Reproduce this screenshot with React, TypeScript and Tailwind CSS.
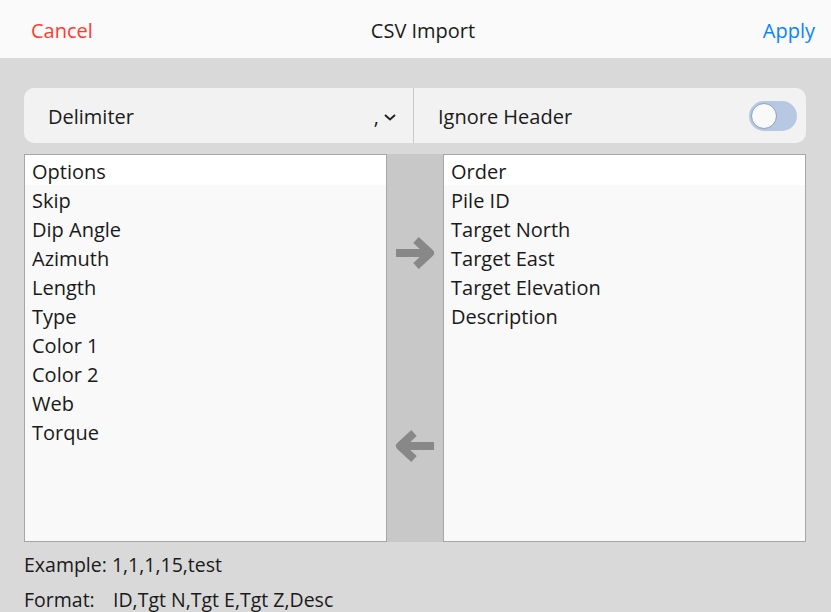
import React, { useState } from 'react';

const leftItems = ['Skip', 'Dip Angle', 'Azimuth', 'Length', 'Type', 'Color 1', 'Color 2', 'Web', 'Torque'];
const rightItems = ['Pile ID', 'Target North', 'Target East', 'Target Elevation', 'Description'];

const ArrowRight: React.FC = () => (
  <svg width="46" height="36" viewBox="0 0 46 36">
    <path d="M4 18 H38 M24 5 L38 18 L24 31" fill="none" stroke="#888" strokeWidth="8" strokeLinejoin="round" />
  </svg>
);

const ArrowLeft: React.FC = () => (
  <svg width="46" height="36" viewBox="0 0 46 36">
    <path d="M42 18 H8 M22 5 L8 18 L22 31" fill="none" stroke="#888" strokeWidth="8" strokeLinejoin="round" />
  </svg>
);

const List: React.FC<{ title: string; items: string[] }> = ({ title, items }) => (
  <div className="flex-1 border border-[#a6a6a6] bg-[#f9f9f9]">
    <div className="bg-white h-[30px] pl-[7px] pt-[2px] leading-[30px]">{title}</div>
    {items.map((it) => (
      <div key={it} className="h-[29px] pl-[7px] pt-[1px] leading-[29px]">
        {it}
      </div>
    ))}
  </div>
);

const App: React.FC = () => {
  const [ignoreHeader, setIgnoreHeader] = useState(false);

  return (
    <div className="w-[831px] h-[612px] bg-[#d9d9d9] text-[#1a1a1a] font-['Open_Sans',sans-serif] overflow-hidden">
      <div className="h-[58px] bg-[#fafafa] flex items-center justify-between pl-[31px] pr-[16px] pt-[3px] text-[20px]">
        <span className="text-[#ff3b30] w-[100px]">Cancel</span>
        <span>CSV Import</span>
        <span className="text-[#0a84ff] w-[100px] text-right">Apply</span>
      </div>

      <div className="px-[24px] pt-[30px]">
        <div className="h-[55px] bg-[#f2f2f2] rounded-[10px] flex items-center mr-[1px] text-[20px]">
          <div className="w-[390px] flex items-center pl-[24px] pr-[16px] pt-[3px] h-full border-r border-[#c8c8c8]">
            <span className="flex-1">Delimiter</span>
            <span className="mr-[4px]">,</span>
            <svg width="14" height="10" viewBox="0 0 14 10">
              <path d="M2 3 L7 7.5 L12 3" fill="none" stroke="#222" strokeWidth="2" />
            </svg>
          </div>
          <div className="flex-1 flex items-center pl-[24px] pr-[9px] h-full">
            <span className="flex-1 pt-[3px]">Ignore Header</span>
            <button
              onClick={() => setIgnoreHeader(!ignoreHeader)}
              className={`w-[48px] h-[30px] rounded-full p-[2px] flex ${ignoreHeader ? 'bg-[#34c759] justify-end' : 'bg-[#b6c8e2] justify-start'}`}
            >
              <span className="w-[26px] h-[26px] rounded-full bg-[#f9f9f9] border border-[#8c9fbd]" />
            </button>
          </div>
        </div>

        <div className="flex mt-[11px] h-[388px] text-[20px] mr-[1px]">
          <List title="Options" items={leftItems} />
          <div className="w-[56px] bg-[#c8c8c8] flex flex-col items-center pt-[81px]">
            <ArrowRight />
            <div className="h-[157px]" />
            <ArrowLeft />
          </div>
          <List title="Order" items={rightItems} />
        </div>

        <div className="text-[19.5px] mt-[10px] leading-[26px]">Example: 1,1,1,15,test</div>
        <div className="text-[19.5px] mt-[9px] leading-[26px] flex">
          <span className="w-[89px]">Format:</span>
          <span>ID,Tgt N,Tgt E,Tgt Z,Desc</span>
        </div>
      </div>
    </div>
  );
};

export default App;
